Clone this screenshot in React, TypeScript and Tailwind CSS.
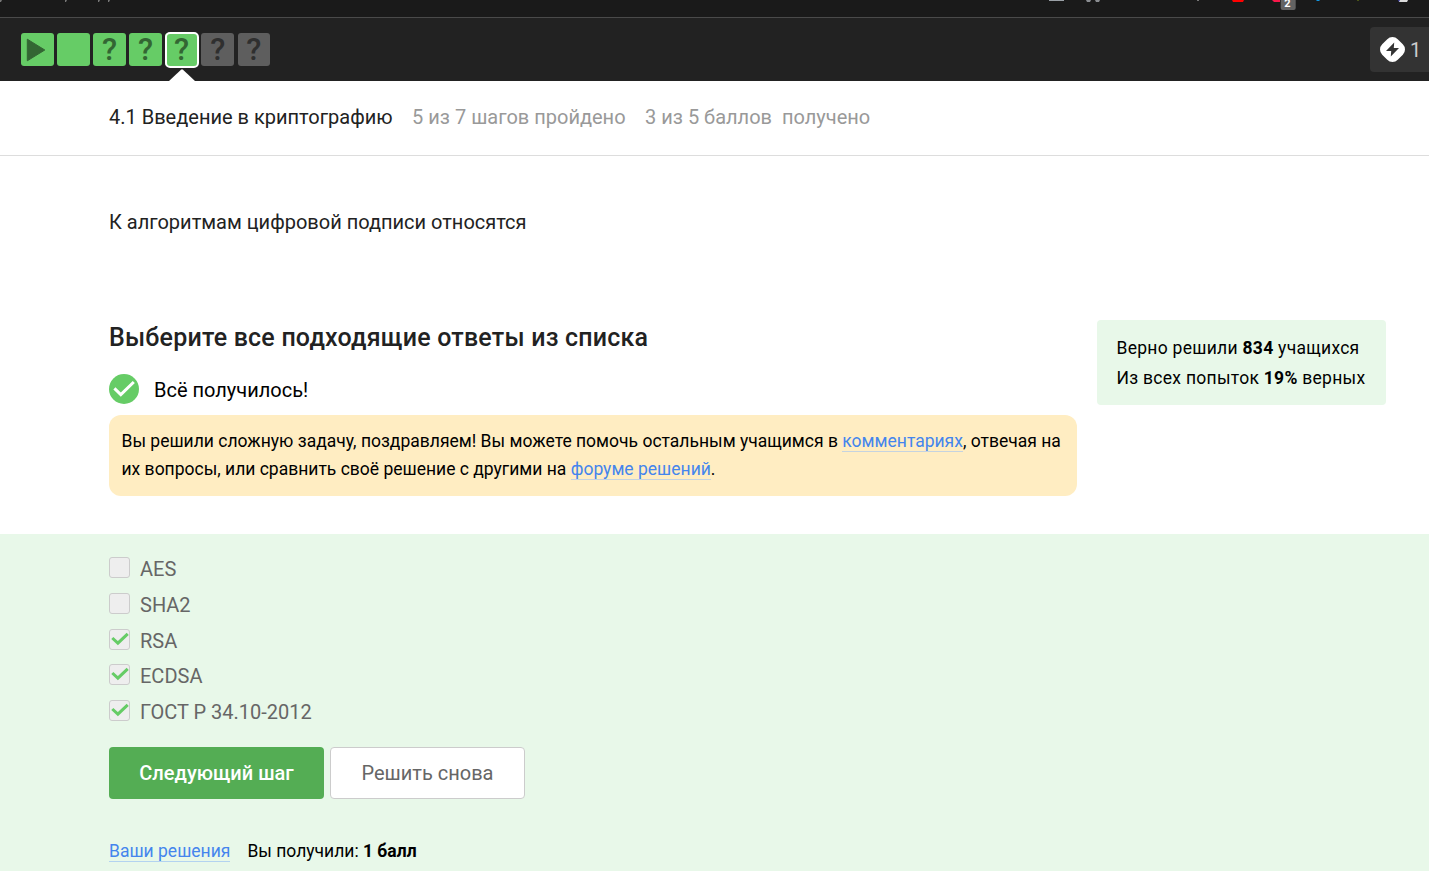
import React from "react";

type StepKind = "video" | "text" | "quiz";

interface Step {
  kind: StepKind;
  passed: boolean;
  active?: boolean;
}

const steps: Step[] = [
  { kind: "video", passed: true },
  { kind: "text", passed: true },
  { kind: "quiz", passed: true },
  { kind: "quiz", passed: true },
  { kind: "quiz", passed: true, active: true },
  { kind: "quiz", passed: false },
  { kind: "quiz", passed: false },
];

const options = [
  { label: "AES", checked: false },
  { label: "SHA2", checked: false },
  { label: "RSA", checked: true },
  { label: "ECDSA", checked: true },
  { label: "ГОСТ Р 34.10-2012", checked: true },
];

function StepTile({ step }: { step: Step }) {
  return (
    <div
      className={`relative flex h-[33px] w-[32.5px] items-center justify-center rounded-[3px] ${
        step.passed ? "bg-[#66cc66] text-[#336633]" : "bg-[#5e5e5e] text-[#2f2f2f]"
      }`}
    >
      {step.kind === "video" && (
        <svg width="20" height="24" viewBox="0 0 20 24" className="-ml-[2px]">
          <path d="M1.3 1.2 18.8 12 1.3 22.8Z" fill="currentColor" stroke="currentColor" strokeLinejoin="round" />
        </svg>
      )}
      {step.kind === "quiz" && <span className="text-[31px] leading-[33px] font-medium">?</span>}
      {step.active && (
        <>
          <span className="absolute -top-[1.5px] -right-[1.5px] -bottom-[1.5px] -left-[0.5px] rounded-[5px] border-2 border-white" />
          <svg className="absolute top-[36px] left-1/2 -translate-x-1/2" width="26" height="12" viewBox="0 0 26 12">
            <path d="M0 12 12 .7Q13 0 14 .7L26 12Z" fill="#fff" />
          </svg>
        </>
      )}
    </div>
  );
}

function BrowserStrip() {
  return (
    <div className="flex h-[18px] items-start border-b border-[#4a4a4a] bg-[#1a1a1a]">
      <svg width="1429" height="17" viewBox="0 0 1429 17">
        <path d="M0 0h2l-1 2H0zM65 0h2l-1 2h-1zM98 0h2l-1 2h-1zM108 0h2l-1 2h-1z" fill="#777" />
        <path d="M1049 0h15v1h-15z" fill="#9aa0a6" />
        <path d="M1086 0h5l-1 2h-3zM1095 0h5l-1 2h-3z" fill="#8a8d91" />
        <path d="M1197 0h2v1h-2z" fill="#777" />
        <path d="M1232 0h12l-1 2h-10z" fill="#f00" />
        <path d="M1272 0h8v2h-6z" fill="#f8184a" />
        <rect x="1280.7" y="-4" width="15" height="14" rx="2" fill="#636363" />
        <path d="M1316 0h4l-1 1h-2z" fill="#1296e0" />
        <path d="M1357 0h2v1h-2z" fill="#4a5518" />
        <path d="M1398 0h3v2h-2z" fill="#3f3fa8" />
        <path d="M1400 0h8l-1 2h-8z" fill="#dadada" />
        <text x="1284.3" y="7" fontSize="11" fontWeight="700" fill="#fff">2</text>
      </svg>
    </div>
  );
}

function CheckBox({ checked }: { checked: boolean }) {
  return (
    <span className="mt-px flex size-[21px] items-center justify-center rounded-[3px] border border-[#ccc] bg-[#eee]">
      {checked && (
        <svg width="19" height="19" viewBox="0 0 19 19">
          <path d="M2.3 8 7.9 13.2 17.7 3.8" fill="none" stroke="#66cc66" strokeWidth="3" />
        </svg>
      )}
    </span>
  );
}

export default function App() {
  return (
    <div className="flex h-[871px] w-[1429px] flex-col overflow-hidden bg-white font-['Roboto',sans-serif] text-black">
      <BrowserStrip />
      <header className="flex h-[63px] shrink-0 items-start justify-between bg-[#222]">
        <div className="flex gap-[3.6px] pt-[15px] pl-[21px]">
          {steps.map((s, i) => (
            <StepTile key={i} step={s} />
          ))}
        </div>
        <div className="mt-[9px] flex h-[45px] w-[59px] items-center rounded-l-[4px] bg-[#333] pl-[10px]">
          <svg width="25" height="25" viewBox="0 0 25 25">
            <rect x="1.5" y="1.5" width="22" height="22" rx="7.4" transform="rotate(45 12.5 12.5)" fill="#fff" />
            <path d="M14.2 5.6 6 13.9h5.2L10.8 19.4 19 11.1h-5.2Z" fill="#333" />
          </svg>
          <span className="ml-[5px] text-[20px] text-[#ccc]">1</span>
        </div>
      </header>

      <div className="flex h-[75px] shrink-0 items-center border-b border-[#ddd] pb-[2px] pl-[109px] text-[20px] text-[#999]">
        <span className="text-[#222]">4.1 Введение в криптографию</span>
        <span className="ml-[19.5px]">5 из 7 шагов пройдено</span>
        <span className="ml-[19.5px]">3 из 5 баллов&nbsp; получено</span>
      </div>

      <main className="flex h-[378px] shrink-0 items-start">
        <section className="ml-[109px] w-[968px] shrink-0 pt-[51px]">
          <p className="text-[20px] leading-[30px] text-[#222]">К алгоритмам цифровой подписи относятся</p>
          <h2 className="mt-[83px] text-[25px] leading-[36px] font-medium tracking-[0.21px] text-[#222]">
            Выберите все подходящие ответы из списка
          </h2>
          <div className="mt-[18px] flex h-[30px] items-center">
            <svg width="30" height="30" viewBox="0 0 30 30">
              <circle cx="15" cy="15" r="15" fill="#66cc66" />
              <path d="M5.4 14.4 11.8 20.6 24.8 8" fill="none" stroke="#fff" strokeWidth="3" />
            </svg>
            <span className="ml-[15px] pt-[2px] text-[20px] leading-[28px]">Всё получилось!</span>
          </div>
          <div className="mt-[11px] h-[81px] rounded-[12px] bg-[#ffedc2] px-[12.5px] pt-[12px] text-[17.5px] leading-[28px] whitespace-nowrap">
            Вы решили сложную задачу, поздравляем! Вы можете помочь остальным учащимся в{" "}
            <a className="border-b border-[#c5d3e0] text-[#4485ed]">комментариях</a>, отвечая на
            <br />
            их вопросы, или сравнить своё решение с другими на{" "}
            <a className="border-b border-[#c5d3e0] text-[#4485ed]">форуме решений</a>.
          </div>
        </section>
        <aside className="mt-[164px] ml-[20px] h-[85px] w-[289px] rounded-[4px] bg-[#e8f8e9] pt-[13px] pl-[19.5px] text-[17.5px] leading-[30px] tracking-[0.28px] whitespace-nowrap">
          <p>
            Верно решили <b>834</b> учащихся
          </p>
          <p>
            Из всех попыток <b>19%</b> верных
          </p>
        </aside>
      </main>

      <section className="flex-1 bg-[#e8f8e9] pt-[22px] pl-[109px]">
        <ul>
          {options.map((o) => (
            <li key={o.label} className="flex h-[35.8px] items-start">
              <CheckBox checked={o.checked} />
              <span className="ml-[10px] text-[20px] leading-[26px] text-[#666]">{o.label}</span>
            </li>
          ))}
        </ul>
        <div className="mt-[12px] flex gap-[6px] text-[20px]">
          <button className="h-[52px] w-[215px] rounded-[4px] bg-[#54ad54] font-medium text-white">Следующий шаг</button>
          <button className="h-[52px] w-[195px] rounded-[4px] border border-[#ccc] bg-white text-[#666]">
            Решить снова
          </button>
        </div>
        <div className="mt-[38px] flex text-[17.5px] leading-[28px]">
          <span>
            <a className="border-b border-[#b3d3f0] text-[#4485ed]">Ваши решения</a>
          </span>
          <span className="ml-[17px]">
            Вы получили: <b>1 балл</b>
          </span>
        </div>
      </section>
    </div>
  );
}
